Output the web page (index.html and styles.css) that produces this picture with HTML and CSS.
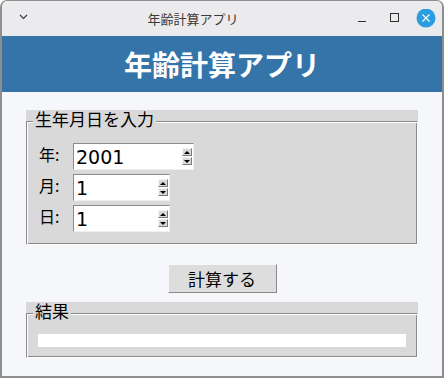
FILE: index.html
```html
<!DOCTYPE html>
<html lang="ja">
<head>
<meta charset="UTF-8">
<title>年齢計算アプリ</title>
<link rel="stylesheet" href="styles.css">
</head>
<body>

<div class="window">
  <div class="titlebar">
    <div class="tb-menu">
      <svg width="42" height="20" viewBox="0 0 42 20"><polyline points="18,6 21.5,9.5 25,6" fill="none" stroke="#3a3a3a" stroke-width="1.2"/></svg>
    </div>
    <div class="tb-title">年齢計算アプリ</div>
    <div class="tb-buttons">
      <svg width="32" height="20" viewBox="0 0 32 20"><line x1="12" y1="12.5" x2="20" y2="12.5" stroke="#2f2f2f" stroke-width="1"/></svg>
      <svg width="32" height="20" viewBox="0 0 32 20"><rect x="12.5" y="4.5" width="8" height="8" fill="none" stroke="#2f2f2f" stroke-width="1"/></svg>
      <svg width="32" height="20" viewBox="0 0 32 20"><circle cx="16" cy="9" r="9.5" fill="#2a9de0"/><path d="M12.5 5.5 L19.5 12.5 M19.5 5.5 L12.5 12.5" stroke="#fff" stroke-width="1.2"/></svg>
    </div>
  </div>

  <div class="header">年齢計算アプリ</div>

  <div class="content">
    <div class="labelframe">
      <span class="lf-title">生年月日を入力</span>
      <div class="lf-body input-grid">
        <span class="field-label">年:</span>
        <div class="spinbox wide">
          <span class="spin-value">2001</span>
          <span class="spin-buttons"><span class="spin-btn up"></span><span class="spin-btn down"></span></span>
        </div>
        <span class="field-label">月:</span>
        <div class="spinbox">
          <span class="spin-value">1</span>
          <span class="spin-buttons"><span class="spin-btn up"></span><span class="spin-btn down"></span></span>
        </div>
        <span class="field-label">日:</span>
        <div class="spinbox">
          <span class="spin-value">1</span>
          <span class="spin-buttons"><span class="spin-btn up"></span><span class="spin-btn down"></span></span>
        </div>
      </div>
    </div>

    <div class="button-row">
      <button class="calc-button">計算する</button>
    </div>

    <div class="labelframe">
      <span class="lf-title">結果</span>
      <div class="lf-body result-body">
        <div class="result-label"></div>
      </div>
    </div>
  </div>
</div>

</body>
</html>
```

FILE: styles.css
```css
body {
  margin: 0;
  overflow: hidden;
  font-family: "Noto Sans CJK JP", "DejaVu Sans", sans-serif;
}

.window {
  width: 444px;
  height: 378px;
  box-sizing: border-box;
  border: 2px solid #8e8e8e;
  border-top-width: 1px;
  border-radius: 7px 7px 0 0;
  background-color: #f6f7fb;
  overflow: hidden;
}

/* window title bar */
.titlebar {
  display: flex;
  height: 35px;
  background-color: #ebebed;
}

.tb-menu {
  width: 42px;
  padding-top: 8px;
}

.tb-title {
  flex: 1;
  text-align: center;
  font-size: 13px;
  line-height: 35px;
  color: #3a3a3a;
  padding-right: 4px;
}

.tb-buttons {
  display: flex;
  padding-top: 8px;
}

.tb-buttons svg {
  display: block;
}

/* blue app header */
.header {
  height: 56px;
  line-height: 56px;
  background-color: #3574a9;
  color: #ffffff;
  font-size: 28px;
  font-weight: bold;
  text-align: center;
}

.content {
  display: flex;
  flex-direction: column;
  padding: 18px 24px 0 24px;
}

/* tk style label frames */
.labelframe {
  display: flex;
  flex-direction: column;
  align-items: flex-start;
  background-color: #d9d9d9;
}

.lf-title {
  position: relative;
  z-index: 1;
  display: block;
  height: 17px;
  margin-left: 7px;
  padding: 0 2px 5px 2px;
  font-size: 17px;
  line-height: 17px;
  background-color: #d9d9d9;
  color: #000;
}

.lf-body {
  align-self: stretch;
  margin-top: -11px;
  border: 1px solid;
  border-color: #8a8a8a #ffffff #ffffff #8a8a8a;
  box-shadow: inset 1px 1px 0 #ffffff, inset -1px -1px 0 #8a8a8a;
}

.input-grid {
  display: grid;
  grid-template-columns: 34px auto;
  justify-content: start;
  row-gap: 4px;
  padding: 21px 12px 12px 12px;
}

.field-label {
  font-size: 16px;
  line-height: 22px;
  align-self: start;
  color: #000;
}

.spinbox {
  display: flex;
  align-items: center;
  width: 97px;
  height: 27px;
  box-sizing: border-box;
  background-color: #ffffff;
  border: 1px solid;
  border-color: #8a8a8a #efefef #efefef #8a8a8a;
}

.spinbox.wide {
  width: 121px;
}

.spin-value {
  flex: 1;
  padding-left: 2px;
  font-family: "DejaVu Sans", sans-serif;
  font-size: 19px;
  color: #000;
}

.spin-buttons {
  display: flex;
  flex-direction: column;
  gap: 1px;
  margin-right: 1px;
}

.spin-btn {
  display: flex;
  align-items: center;
  justify-content: center;
  width: 10px;
  height: 8px;
  box-sizing: border-box;
  background-color: #d9d9d9;
  border: 1px solid;
  border-color: #f4f4f4 #7a7a7a #7a7a7a #f4f4f4;
}

.spin-btn::after {
  content: "";
  border-left: 3px solid transparent;
  border-right: 3px solid transparent;
}

.spin-btn.up::after {
  border-bottom: 3px solid #000;
}

.spin-btn.down::after {
  border-top: 3px solid #000;
}

.button-row {
  display: flex;
  justify-content: center;
  padding: 19px 0 9px 0;
}

.calc-button {
  width: 109px;
  height: 29px;
  padding: 0;
  font-family: "Noto Sans CJK JP", sans-serif;
  font-size: 17px;
  line-height: 27px;
  color: #000;
  background-color: #dddddd;
  border: 1px solid;
  border-color: #f8f8f8 #8a8a8a #8a8a8a #f8f8f8;
}

.result-body {
  padding: 20px 11px 10px 11px;
}

.result-label {
  height: 13px;
  background-color: #ffffff;
}
```
